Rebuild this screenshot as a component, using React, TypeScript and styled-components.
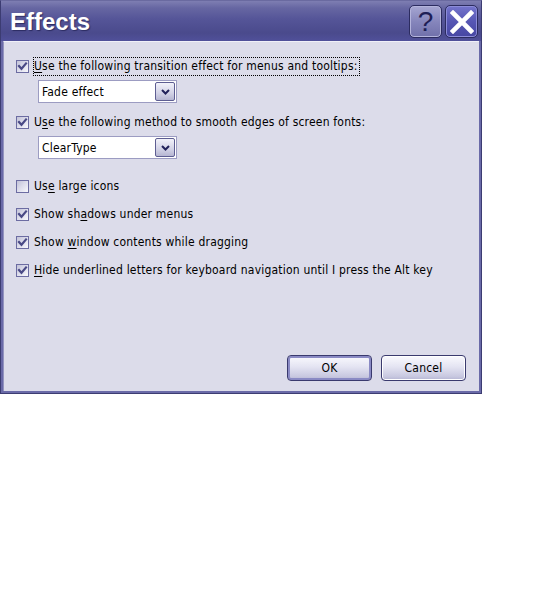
import React from "react";
import styled, { createGlobalStyle } from "styled-components";

const Global = createGlobalStyle`
  html, body { margin: 0; padding: 0; background: #ffffff; }
  body { font-family: "DejaVu Sans Condensed", "DejaVu Sans", sans-serif; }
`;

const Window = styled.div`
  width: 482px;
  height: 394px;
  box-sizing: border-box;
  display: flex;
  flex-direction: column;
  border: 1px solid #3c3c72;
  border-top-color: #6a6aa0;
  background: #6868a4;
`;

const TitleBar = styled.div`
  height: 40px;
  flex: none;
  display: flex;
  align-items: center;
  padding: 0 3px 0 9px;
  background: linear-gradient(
    to bottom,
    #7e7eb2 0%,
    #6666a2 18%,
    #555598 45%,
    #4a4a8c 80%,
    #50509a 100%
  );
`;

const Title = styled.div`
  flex: 1;
  font-family: "Liberation Sans", "DejaVu Sans", sans-serif;
  font-weight: bold;
  font-size: 24px;
  color: #ffffff;
  text-shadow: 1px 1px 1px #2c2c62;
  padding-top: 1px;
`;

const CaptionButtons = styled.div`
  display: flex;
  gap: 3px;
  padding-top: 1px;
`;

const CaptionButton = styled.div<{ $kind: "help" | "close" }>`
  width: 33px;
  height: 33px;
  box-sizing: border-box;
  border: 1px solid #2c2c60;
  border-radius: 5px;
  display: flex;
  align-items: center;
  justify-content: center;
  box-shadow: inset 0 0 0 1px ${(p) => (p.$kind === "help" ? "#b4b4dc" : "#8c8cd8")};
  background: ${(p) =>
    p.$kind === "help"
      ? "linear-gradient(to bottom, #a6a6d2 0%, #8686bc 50%, #7070aa 100%)"
      : "linear-gradient(to bottom, #7474cc 0%, #5656b4 50%, #4646a2 100%)"};
`;

const HelpGlyph = styled.span`
  font-family: "Liberation Sans", "DejaVu Sans", sans-serif;
  font-size: 28px;
  line-height: 1;
  color: #1e1e56;
  margin-top: 1px;
`;

const Frame = styled.div`
  flex: 1;
  display: flex;
  border: 2px solid #6a6aa8;
  border-top: none;
`;

const Client = styled.div`
  flex: 1;
  display: flex;
  flex-direction: column;
  background: #dcdcea;
  border-left: 1px solid #9494c0;
  border-top: 1px solid #f0f0f8;
  padding: 15px 13px 10px 12px;
  font-size: 12px;
  letter-spacing: 0.2px;
  color: #000000;
`;

const CheckRow = styled.div<{ $gap: number }>`
  display: flex;
  align-items: center;
  height: 18px;
  margin-top: ${(p) => p.$gap}px;
`;

const Box = styled.div<{ $checked: boolean }>`
  width: 13px;
  height: 13px;
  box-sizing: border-box;
  flex: none;
  border: 1px solid #6c6ca2;
  background: linear-gradient(135deg, #c2c2d8 0%, #dedeec 50%, #f8f8fc 100%);
  display: flex;
  align-items: center;
  justify-content: center;
`;

const Label = styled.span<{ $focused?: boolean }>`
  margin-left: 4px;
  padding: 2px 1px 2px 0;
  border: 1px dotted ${(p) => (p.$focused ? "#000000" : "transparent")};
  white-space: nowrap;
  line-height: 13px;
`;

const Key = styled.span`
  text-decoration: underline;
  text-underline-offset: 2px;
`;

const Combo = styled.div<{ $gap: number }>`
  margin-top: ${(p) => p.$gap}px;
  margin-left: 22px;
  width: 139px;
  height: 23px;
  box-sizing: border-box;
  border: 1px solid #9c9cc2;
  background: #ffffff;
  display: flex;
  align-items: center;
  padding: 0 1px 0 3px;
`;

const ComboText = styled.span`
  flex: 1;
`;

const DropButton = styled.div`
  width: 20px;
  height: 19px;
  box-sizing: border-box;
  border: 1px solid #5e5e92;
  border-radius: 2px;
  background: linear-gradient(to bottom, #f2f2fa 0%, #d2d2e6 60%, #b6b6d2 100%);
  display: flex;
  align-items: center;
  justify-content: center;
`;

const Footer = styled.div`
  margin-top: auto;
  display: flex;
  justify-content: flex-end;
  gap: 9px;
`;

const PushButton = styled.div<{ $default?: boolean }>`
  width: 85px;
  height: 26px;
  box-sizing: border-box;
  border: 1px solid #3a3a6e;
  border-radius: 4px;
  display: flex;
  align-items: center;
  justify-content: center;
  background: linear-gradient(to bottom, #fafafe 0%, #e4e4f2 45%, #c8c8e0 85%, #b4b4d2 100%);
  box-shadow: ${(p) =>
    p.$default ? "inset 0 0 0 2px #8a8ac4" : "inset 0 0 0 1px #ffffff"};
`;

const Check = () => (
  <svg width="11" height="11" viewBox="0 0 11 11">
    <polyline
      points="2,5 4.5,7.8 9,2.5"
      fill="none"
      stroke="#4a4a86"
      strokeWidth="2.2"
      strokeLinecap="square"
    />
  </svg>
);

const Chevron = () => (
  <svg width="9" height="6" viewBox="0 0 9 6">
    <polyline points="1,1 4.5,4.5 8,1" fill="none" stroke="#22225a" strokeWidth="2" />
  </svg>
);

const CloseX = () => (
  <svg width="24" height="24" viewBox="0 0 24 24">
    <path d="M3 3 L21 21 M21 3 L3 21" stroke="#ffffff" strokeWidth="4.6" strokeLinecap="square" />
  </svg>
);

type RowProps = {
  checked: boolean;
  gap: number;
  focused?: boolean;
  children: React.ReactNode;
};

const Row = ({ checked, gap, focused, children }: RowProps) => (
  <CheckRow $gap={gap}>
    <Box $checked={checked}>{checked && <Check />}</Box>
    <Label $focused={focused}>{children}</Label>
  </CheckRow>
);

export default function App() {
  return (
    <>
      <Global />
      <Window>
        <TitleBar>
          <Title>Effects</Title>
          <CaptionButtons>
            <CaptionButton $kind="help">
              <HelpGlyph>?</HelpGlyph>
            </CaptionButton>
            <CaptionButton $kind="close">
              <CloseX />
            </CaptionButton>
          </CaptionButtons>
        </TitleBar>
        <Frame>
          <Client>
            <Row checked gap={0} focused>
              <Key>U</Key>se the following transition effect for menus and tooltips:
            </Row>
            <Combo $gap={5}>
              <ComboText>Fade effect</ComboText>
              <DropButton>
                <Chevron />
              </DropButton>
            </Combo>
            <Row checked gap={10}>
              U<Key>s</Key>e the following method to smooth edges of screen fonts:
            </Row>
            <Combo $gap={5}>
              <ComboText>ClearType</ComboText>
              <DropButton>
                <Chevron />
              </DropButton>
            </Combo>
            <Row checked={false} gap={18}>
              Us<Key>e</Key> large icons
            </Row>
            <Row checked gap={10}>
              Show sh<Key>a</Key>dows under menus
            </Row>
            <Row checked gap={10}>
              Show <Key>w</Key>indow contents while dragging
            </Row>
            <Row checked gap={10}>
              <Key>H</Key>ide underlined letters for keyboard navigation until I press the Alt key
            </Row>
            <Footer>
              <PushButton $default>OK</PushButton>
              <PushButton>Cancel</PushButton>
            </Footer>
          </Client>
        </Frame>
      </Window>
    </>
  );
}
